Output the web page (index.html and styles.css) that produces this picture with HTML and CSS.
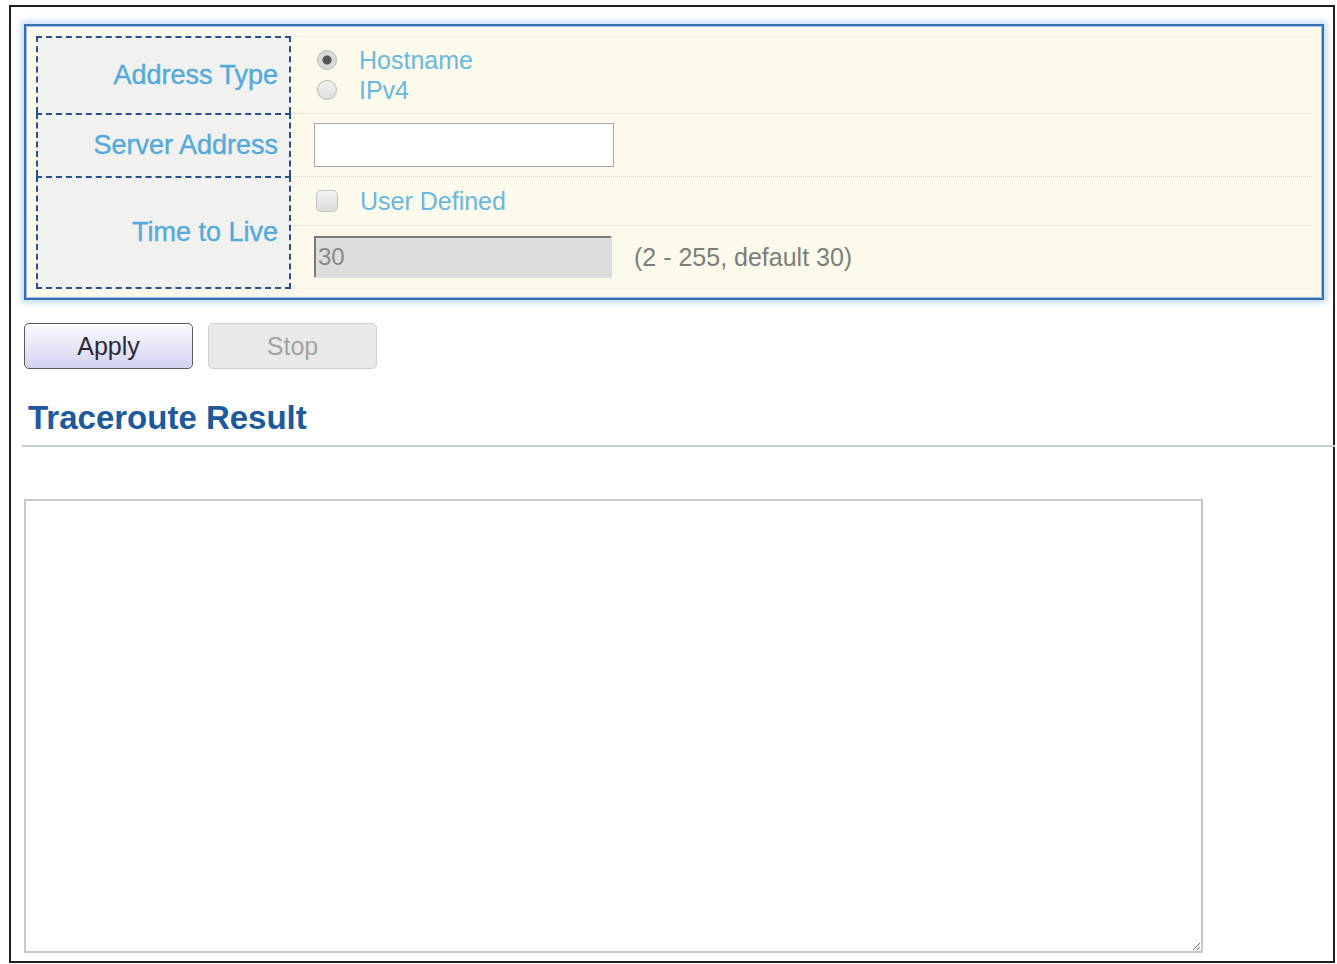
FILE: index.html
```html
<!DOCTYPE html>
<html lang="en">
<head>
  <meta charset="UTF-8">
  <title>Traceroute</title>
  <link rel="stylesheet" href="styles.css">
</head>
<body>
  <div class="frame">
    <!-- settings panel -->
    <form class="panel" id="traceroute-form">
      <div class="label-cell row-addr">Address Type</div>
      <div class="value-cell row-addr first">
        <div class="choices">
          <label class="choice"><input type="radio" name="addr" checked><span>Hostname</span></label>
          <label class="choice"><input type="radio" name="addr"><span>IPv4</span></label>
        </div>
      </div>

      <div class="label-cell row-server">Server Address</div>
      <div class="value-cell row-server">
        <input type="text" class="field">
      </div>

      <div class="label-cell row-ttl last">Time to Live</div>
      <div class="value-cell row-ttl stack">
        <div class="sub sub-check">
          <label class="choice check"><input type="checkbox"><span>User Defined</span></label>
        </div>
        <div class="sub sub-ttl">
          <input type="text" class="field ttl" value="30" disabled>
          <span class="hint">(2 - 255, default 30)</span>
        </div>
      </div>
    </form>

    <div class="actions">
      <button type="button" class="btn apply">Apply</button>
      <button type="button" class="btn stop" disabled>Stop</button>
    </div>

    <h2 class="section-title">Traceroute Result</h2>

    <textarea class="result" readonly></textarea>
  </div>
</body>
</html>
```

FILE: styles.css
```css
/* page */
body {
  margin: 0;
  background: #fff;
  font-family: "Liberation Sans", Arial, sans-serif;
}

.frame {
  margin: 5px 2px 1px 9px;
  height: 958px;
  box-sizing: border-box;
  border: 2px solid #1e1e1e;
  display: flex;
  flex-direction: column;
  padding: 17px 9px 0 13px;
}

/* settings panel */
.panel {
  display: grid;
  grid-template-columns: 255px 1fr;
  grid-template-rows: 77px 63px 113px;
  height: 276px;
  box-sizing: border-box;
  padding: 10px 10px 9px 10px;
  border: 2px solid #3a6fb0;
  background: #fcfaea;
  box-shadow: 0 0 6px 3px #c6def4, inset 0 0 0 1px #9fc0e4;
}

.label-cell {
  display: flex;
  align-items: center;
  justify-content: flex-end;
  padding-right: 11px;
  background: #f1f1ef;
  border: 2px dashed #27508c;
  border-bottom: none;
  color: #55aadc;
  font-size: 27px;
  -webkit-text-stroke: 0.4px #55aadc;
}

.label-cell.last {
  border-bottom: 2px dashed #27508c;
}

.value-cell {
  display: flex;
  align-items: center;
  padding-left: 23px;
  border-top: 1px dotted #d9d6c2;
}

.value-cell.first {
  border-top: 1px dotted #ece9d6;
}

.value-cell.stack {
  flex-direction: column;
  align-items: stretch;
  padding-left: 0;
  border-bottom: 1px dotted #ece9d6;
}

.sub {
  display: flex;
  align-items: center;
  padding-left: 23px;
}

.sub-check {
  height: 48px;
}

.sub-ttl {
  flex: 1;
  border-top: 1px dotted #d9d6c2;
}

/* radios and checkbox */
.choices {
  display: flex;
  flex-direction: column;
}

.choice {
  display: flex;
  align-items: center;
  height: 30px;
  color: #6ab8e0;
  font-size: 25px;
}

.choice input {
  appearance: none;
  margin: 0 22px 0 3px;
  width: 20px;
  height: 20px;
  border: 1px solid #b9b9b9;
  border-radius: 50%;
  background: linear-gradient(#f4f4f4, #dcdcdc);
}

.choice input:checked {
  background: radial-gradient(circle, #555 0 4px, #d4d4d4 5px, #e6e6e6 100%);
}

.choice.check input {
  margin: 0 22px 0 2px;
  width: 22px;
  height: 22px;
  border-radius: 5px;
  border-color: #c4c4c4;
}

/* text fields */
.field {
  width: 300px;
  height: 44px;
  box-sizing: border-box;
  border: 1px solid #a9a9a9;
  background: #fff;
  font-family: inherit;
  font-size: 24px;
  padding: 0 3px;
}

.field.ttl {
  width: 298px;
  height: 42px;
  border: 2px solid #dcdcdc;
  border-top-color: #7a7a7a;
  border-left-color: #7a7a7a;
  background: #dddddd;
  color: #8a8a8a;
  padding: 0 2px;
}

.hint {
  margin-left: 22px;
  color: #7d7d7d;
  font-size: 25px;
}

/* buttons */
.actions {
  display: flex;
  gap: 15px;
  margin-top: 23px;
}

.btn {
  width: 169px;
  height: 46px;
  border-radius: 5px;
  font-family: inherit;
  font-size: 25px;
}

.apply {
  border: 1px solid #5a5a5a;
  background: linear-gradient(#fbfbff, #d3d2f0);
  color: #2a2a36;
}

.stop {
  border: 1px solid #cfcfcf;
  background: #e9e9e9;
  color: #a3a3a3;
}

/* result */
.section-title {
  margin: 31px -11px 0 -2px;
  padding: 0 0 9px 6px;
  border-bottom: 2px solid #c6ceda;
  color: #1d5a9c;
  font-size: 33px;
  line-height: 36px;
}

.result {
  margin-top: 52px;
  width: 1179px;
  height: 454px;
  box-sizing: border-box;
  border: 2px solid #c8c8c8;
  resize: both;
}
```
